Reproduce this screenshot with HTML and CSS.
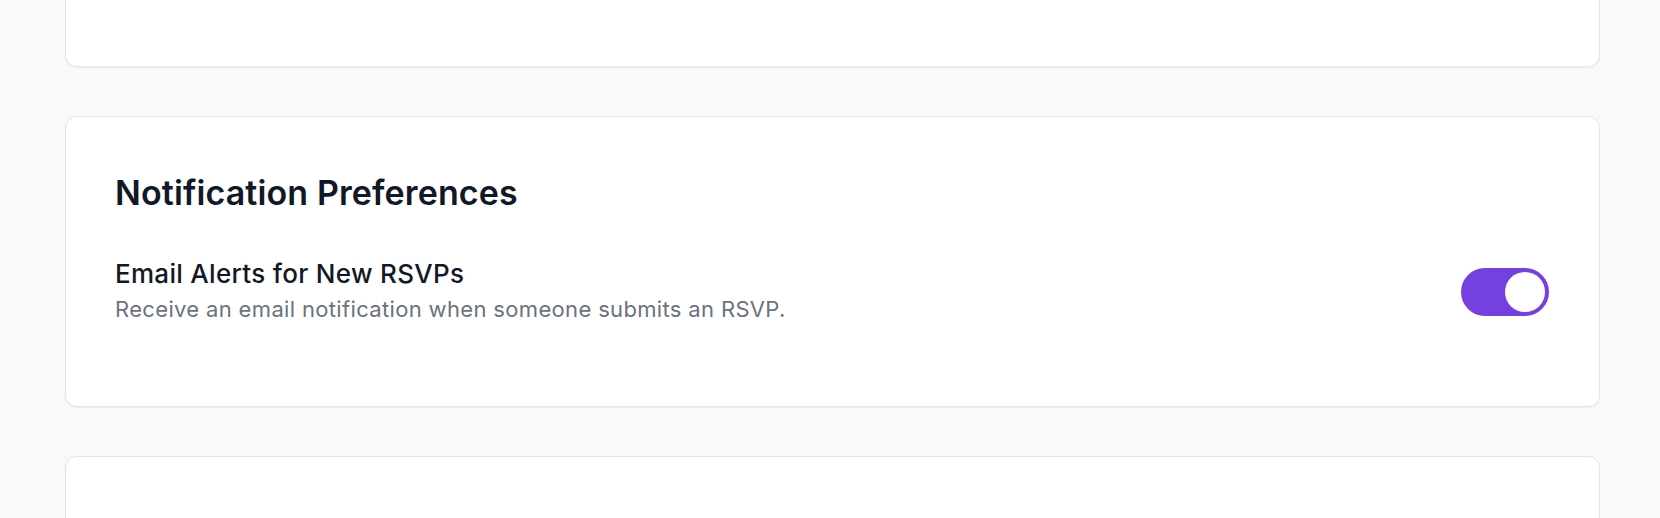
FILE: index.html
```html
<!DOCTYPE html>
<html lang="en">
<head>
  <meta charset="UTF-8"/>
  <meta name="viewport" content="width=device-width, initial-scale=1.0"/>
  <title>Settings</title>
  <link rel="stylesheet" href="styles.css">
</head>
<body>
  <main class="page">
    <!-- previous section, scrolled mostly out of view -->
    <section class="card card-cut"></section>

    <!-- Notifications -->
    <section class="card prefs">
      <h2>Notification Preferences</h2>
      <div class="pref-row">
        <div class="pref-text">
          <h3>Email Alerts for New RSVPs</h3>
          <p>Receive an email notification when someone submits an RSVP.</p>
        </div>
        <button class="toggle on" type="button" aria-pressed="true" aria-label="Email alerts"><span class="knob"></span></button>
      </div>
    </section>

    <!-- next section -->
    <section class="card card-next"></section>
  </main>
</body>
</html>
```

FILE: styles.css
```css
:root{
  --bg: #f8f9fb;
  --card: #fff;
  --line: #e3e5ea;
  --ink: #111827;
  --muted: #6b7280;
  --violet: #7540e0;
}
* { box-sizing: border-box; margin: 0; }
body {
  font-family: Inter, "Noto Sans", sans-serif;
  background: var(--bg);
  color: var(--ink);
}
.page {
  display: flex;
  flex-direction: column;
  gap: 49px;
  padding: 0 60px 0 65px;
}
.card {
  background: var(--card);
  border: 1px solid var(--line);
  border-radius: 12px;
  box-shadow: 0 1px 2px rgba(16,24,40,.06);
}
.card-cut {
  height: 67px;
  border-top: 0;
  border-radius: 0 0 12px 12px;
}
.card-next { height: 120px; }

/* Notification card */
.prefs {
  height: 291px;
  padding: 56px 50px 0 49px;
}
.prefs h2 {
  font-size: 34px;
  font-weight: 600;
  line-height: 40px;
  letter-spacing: .12px;
  margin-bottom: 45px;
}
.pref-row {
  display: flex;
  justify-content: space-between;
  align-items: center;
}
.pref-text h3 {
  font-size: 26px;
  font-weight: 500;
  line-height: 32px;
  letter-spacing: .3px;
}
.pref-text p {
  margin-top: 3px;
  font-size: 22px;
  line-height: 32px;
  letter-spacing: .34px;
  color: var(--muted);
}

/* Toggle */
.toggle {
  width: 88px; height: 48px;
  border: 0; padding: 4px;
  border-radius: 24px;
  background: #d1d5db;
  display: flex;
  cursor: pointer;
}
.toggle.on { background: var(--violet); justify-content: flex-end; }
.knob {
  width: 40px; height: 40px;
  border-radius: 50%;
  background: #fff;
}
```
